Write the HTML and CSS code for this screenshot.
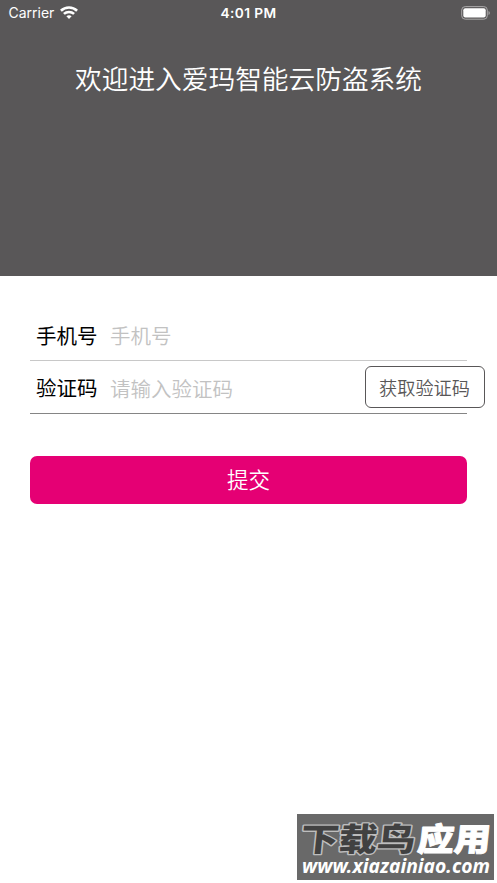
FILE: index.html
```html
<!DOCTYPE html>
<html lang="zh-CN">
<head>
<meta charset="utf-8">
<title>爱玛智能云防盗系统</title>
<link rel="stylesheet" href="styles.css">
</head>
<body>
<header class="hero">
  <div class="status">
    <div class="carrier">Carrier
      <svg class="wifi" viewBox="0 0 18 13" width="18" height="13" fill="none" stroke="#fff" stroke-width="2.6"><path d="M.9 4.700C5.400.4 12.600.4 17.100 4.700"/><path d="M3.900 7.900c2.900-2.600 7.300-2.600 10.200 0"/><path d="M6.400 10.300c1.500-1.300 3.700-1.300 5.200 0L9 12.900z" fill="#fff" stroke="none"/></svg>
    </div>
    <div class="time">4:01 PM</div>
    <svg class="battery" viewBox="0 0 29 14" width="29" height="14"><rect x=".7" y=".6" width="25.600" height="12.600" rx="3.500" fill="none" stroke="#aaa8a9"/><rect x="2.300" y="2.200" width="22.400" height="9.400" rx="2" fill="#fff"/><path d="M27.500 5v4q1.300-.6 1.300-2t-1.300-2z" fill="#aaa8a9"/></svg>
  </div>
  <h1 class="title">欢迎进入爱玛智能云防盗系统</h1>
</header>
<main class="form">
  <div class="field phone"><label class="label" for="phone">手机号</label><input class="input" id="phone" placeholder="手机号"></div>
  <div class="field code"><label class="label" for="code">验证码</label><input class="input" id="code" placeholder="请输入验证码"><button class="get-code">获取验证码</button></div>
  <button class="submit">提交</button>
</main>
<aside class="watermark">
  <svg viewBox="0 0 197 66" width="197" height="66">
    <g class="brand" transform="translate(0 3) skewX(-6) scale(1 .92)">
      <text class="brand-dark" x="6" y="37" textLength="115" lengthAdjust="spacingAndGlyphs">下载鸟</text>
      <text class="brand-light" x="123" y="37" textLength="73" lengthAdjust="spacingAndGlyphs">应用</text>
    </g>
    <text class="url" x="5" y="59" textLength="188" lengthAdjust="spacingAndGlyphs">www.xiazainiao.com</text>
  </svg>
</aside>
</body>
</html>
```
FILE: styles.css
```css
* { box-sizing: border-box; }
body {
  margin: 0;
  height: 883px;
  overflow: hidden;
  position: relative;
  background: #fff;
  font-family: "Noto Sans CJK SC", sans-serif;
}
.hero { height: 276px; background: #595758; color: #fff; }
.status {
  height: 26px;
  padding: 0 6px 0 9px;
  display: grid;
  grid-template-columns: 1fr auto 1fr;
  align-items: center;
  font: 14px/26px Inter, sans-serif;
}
.carrier { display: flex; align-items: center; gap: 6px; margin-left: -.5px; }
.wifi { margin-top: -1px; }
.time { font-weight: 600; font-size: 13.700px; letter-spacing: .4px; margin-left: -3px; }
.battery { justify-self: end; margin-right: 1px; }
.title {
  margin: 32px 0 0;
  text-align: center;
  font-size: 26.700px;
  line-height: 40px;
  font-weight: 350;
  white-space: nowrap;
}
.form { padding: 33px 30px 0; }
.field { display: flex; align-items: center; padding-left: 6px; border-bottom: 1px solid #c8c8c8; }
.phone { height: 52px; }
.phone .input { padding-top: 1px; }
.code { height: 53px; border-color: #858585; }
.label { width: 74px; flex: none; font-size: 20.500px; line-height: 30px; font-weight: 400; color: #000; }
.input {
  width: 240px;
  padding: 2px 0 0;
  border: 0;
  outline: 0;
  background: none;
  font: 350 20.500px/30px "Noto Sans CJK SC", sans-serif;
}
.input::placeholder { color: #c2c2c2; opacity: 1; }
.get-code {
  flex: none;
  width: 120px;
  height: 42px;
  margin: 0 -18px 0 auto;
  padding: 0 1px 0 0;
  border: 1px solid #595758;
  border-radius: 6px;
  background: #fff;
  color: #595758;
  font: 350 18.200px/38px "Noto Sans CJK SC", sans-serif;
}
.submit {
  display: block;
  width: 437px;
  height: 48px;
  margin-top: 42px;
  padding: 0 0 2px;
  border: 0;
  border-radius: 7px;
  background: #e50074;
  color: #fff;
  font: 350 21.500px/46px "Noto Sans CJK SC", sans-serif;
}
.watermark { position: absolute; left: 297px; top: 814px; width: 197px; height: 66px; background: #696969; }
.watermark svg { display: block; overflow: visible; }
.brand { font: 900 35px "Noto Sans CJK SC", sans-serif; paint-order: stroke; stroke-linejoin: round; }
.brand-dark { fill: #414141; stroke: #bdbdbd; stroke-width: 3px; }
.brand-light { fill: #fff; stroke: #fff; stroke-width: 1px; }
.url { font: italic 700 20px "Noto Sans", sans-serif; fill: #fff; }
```
